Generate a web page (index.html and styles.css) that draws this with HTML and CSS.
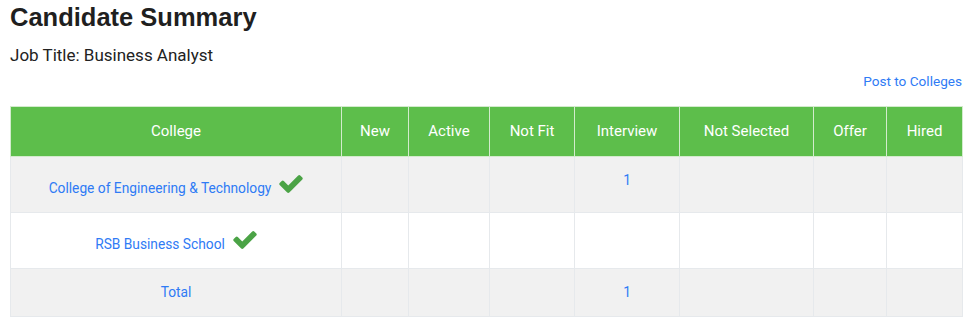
FILE: index.html
```html
<!DOCTYPE html>
<html lang="en">
<head>
<meta charset="utf-8">
<title>Candidate Summary</title>
<link rel="stylesheet" href="styles.css">
</head>
<body>
<div class="page">
  <h1 class="title">Candidate Summary</h1>
  <p class="job">Job Title: Business Analyst</p>
  <div class="actions"><a class="link" href="#">Post to Colleges</a></div>
  <table class="summary">
    <colgroup>
      <col style="width:331px"><col style="width:67px"><col style="width:81px"><col style="width:85px">
      <col style="width:105px"><col style="width:134px"><col style="width:73px"><col style="width:76px">
    </colgroup>
    <thead>
      <tr>
        <th>College</th><th>New</th><th>Active</th><th>Not Fit</th><th>Interview</th><th>Not Selected</th><th>Offer</th><th>Hired</th>
      </tr>
    </thead>
    <tbody>
      <tr class="striped">
        <td><a class="link" href="#">College of Engineering &amp; Technology</a><svg class="check" viewBox="121 334 1550 1188" aria-hidden="true"><path d="M1671 566q0 40-28 68l-724 724-136 136q-28 28-68 28t-68-28l-136-136-362-362q-28-28-28-68t28-68l136-136q28-28 68-28t68 28l294 295 656-657q28-28 68-28t68 28l136 136q28 28 28 68z"/></svg></td>
        <td></td><td></td><td></td><td><a class="link" href="#">1</a></td><td></td><td></td><td></td>
      </tr>
      <tr>
        <td><a class="link" href="#">RSB Business School</a><svg class="check" viewBox="121 334 1550 1188" aria-hidden="true"><path d="M1671 566q0 40-28 68l-724 724-136 136q-28 28-68 28t-68-28l-136-136-362-362q-28-28-28-68t28-68l136-136q28-28 68-28t68 28l294 295 656-657q28-28 68-28t68 28l136 136q28 28 28 68z"/></svg></td>
        <td></td><td></td><td></td><td></td><td></td><td></td><td></td>
      </tr>
      <tr class="striped">
        <td><a class="link" href="#">Total</a></td>
        <td></td><td></td><td></td><td><a class="link" href="#">1</a></td><td></td><td></td><td></td>
      </tr>
    </tbody>
  </table>
</div>
</body>
</html>
```
FILE: styles.css
```css
html, body {
  margin: 0;
  padding: 0;
  background: #ffffff;
}

.page {
  padding: 0 12px 0 10px;
  font-family: Roboto, "Liberation Sans", sans-serif;
  color: #222222;
}

.title {
  margin: 0;
  padding-top: 1px;
  font-family: "Liberation Sans", Arial, sans-serif;
  font-weight: bold;
  font-size: 25.5px;
  line-height: 32px;
  color: #1f1f1f;
}

.job {
  margin: 12px 0 0;
  font-size: 17px;
  line-height: 20px;
  color: #222222;
}

.actions {
  margin-top: 6px;
  text-align: right;
  font-size: 13.6px;
  line-height: 20px;
}

.link {
  color: #2f7bf5;
  text-decoration: none;
}

.summary {
  margin-top: 15px;
  width: 952px;
  border-collapse: collapse;
  table-layout: fixed;
  border: 1px solid #e3e6ea;
}

.summary th {
  background: #5dbe4b;
  color: #ffffff;
  font-weight: normal;
  font-size: 15px;
  line-height: 21px;
  padding: 14px 4px;
  border: 1px solid #d3ebcd;
  text-align: center;
  vertical-align: middle;
}

.summary td {
  font-size: 13.75px;
  line-height: 19px;
  padding: 14px 4px;
  border: 1px solid #e6e9ec;
  text-align: center;
  vertical-align: top;
}

.striped td {
  background: #f1f1f1;
}

.check {
  display: inline-block;
  width: 24px;
  height: 18px;
  margin: 4px 0 0 8px;
  vertical-align: baseline;
  fill: #4ba346;
}
```
